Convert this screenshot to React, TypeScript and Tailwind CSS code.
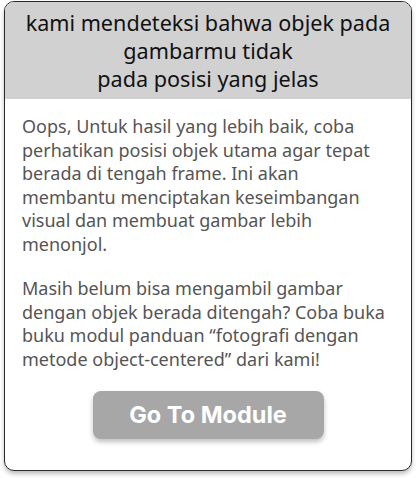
export default function App() {
  return (
    <div className="min-h-[478px] w-[416px] bg-white px-1 pt-px">
      <div className="overflow-hidden rounded-[10px] border border-[#2a2a2a] bg-white shadow-[0_3px_4px_rgba(0,0,0,0.25)]">
        <header className="flex h-[97px] flex-col items-center justify-center bg-[#d1d1d1] text-center font-['Noto_Sans',sans-serif] text-[21.6px] leading-[28px] text-[#111]">
          <p>kami mendeteksi bahwa objek pada</p>
          <p>gambarmu tidak</p>
          <p>pada posisi yang jelas</p>
        </header>
        <div className="pl-[17px] pr-[25px] pt-[16px] pb-[31px] font-['Noto_Sans',sans-serif] text-[18px] leading-[23.5px] text-[#555]">
          <p>
            Oops, Untuk hasil yang lebih baik, coba perhatikan posisi objek utama agar tepat berada di tengah frame. Ini akan membantu menciptakan keseimbangan visual dan membuat gambar lebih menonjol.
          </p>
          <p className="mt-[21px]">
            Masih belum bisa mengambil gambar dengan objek berada ditengah? Coba buka buku modul panduan “fotografi dengan metode object-centered” dari kami!
          </p>
          <div className="mt-[20px] flex justify-center pl-[8px]">
            <button
              type="button"
              className="flex h-[48px] w-[231px] items-center justify-center rounded-[8px] bg-[#a7a7a7] font-['Inter',sans-serif] text-[23.5px] font-bold text-white shadow-[0_3px_5px_rgba(0,0,0,0.25)]"
            >
              Go To Module
            </button>
          </div>
        </div>
      </div>
    </div>
  );
}
